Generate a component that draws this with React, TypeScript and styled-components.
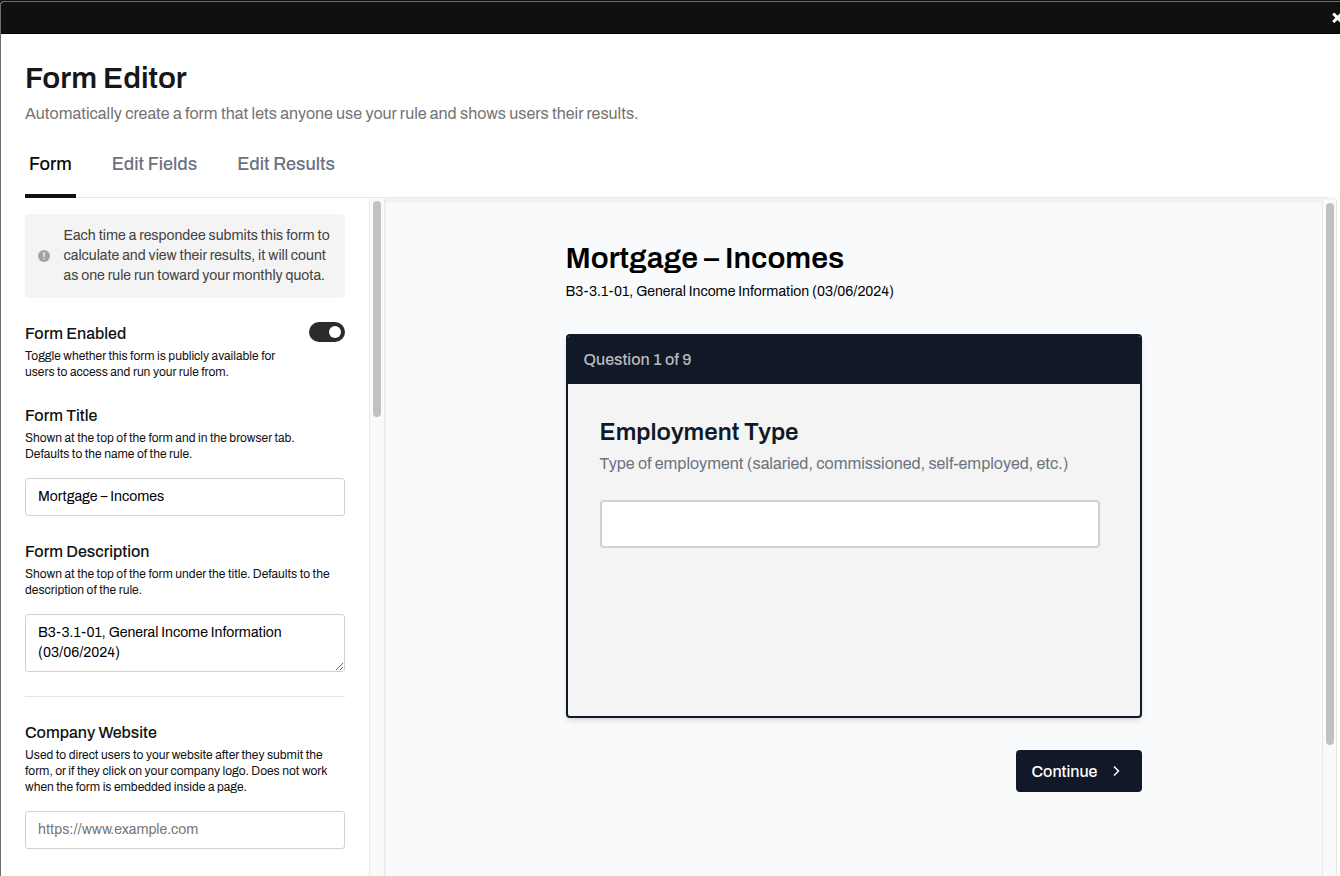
import React from "react";
import styled, { createGlobalStyle } from "styled-components";

const GlobalStyle = createGlobalStyle`
  *, *::before, *::after { box-sizing: border-box; }
  body {
    margin: 0;
    background: #111;
    overflow: hidden;
    font-family: Archivo, "Liberation Sans", Arial, sans-serif;
    color: #111;
  }
  h1, h2, h3, p { margin: 0; }
  input, textarea, button { font-family: inherit; }
`;

const Window = styled.div`
  display: flex;
  flex-direction: column;
  width: 100%;
  height: 876px;
  padding-top: 1px;
`;

const Frame = styled.div`
  flex: 1;
  min-height: 0;
  display: flex;
  flex-direction: column;
  background: #fff;
  border-top: 1px solid #6e6e70;
  border-left: 1px solid #6e6e70;
  border-top-left-radius: 4px;
  overflow: hidden;
`;

const TopBar = styled.div`
  display: flex;
  justify-content: flex-end;
  align-items: center;
  flex: none;
  height: 32px;
  background: #101010;
  border-bottom: 1px solid #000;
`;

const CloseIcon = styled.svg`
  flex: none;
  width: 11px;
  height: 11px;
  margin-right: -3px;
  stroke: #fff;
  stroke-width: 3;
`;

const Header = styled.header`
  flex: none;
  padding: 26px 11px 0 24px;
`;

const Title = styled.h1`
  font-size: 30px;
  line-height: 36px;
  font-weight: 600;
  color: #171717;
`;

const Subtitle = styled.p`
  margin-top: 6px;
  font-size: 16px;
  line-height: 24px;
  color: #737373;
`;

const Tabs = styled.nav`
  display: flex;
  gap: 32px;
  margin-top: 24px;
  height: 48px;
  box-shadow: inset 0 -1px #e5e7eb;
`;

const Tab = styled.a<{ $active?: boolean }>`
  padding: 0 4px;
  font-size: 18px;
  line-height: 28px;
  font-weight: 500;
  color: ${(p) => (p.$active ? "#0a0a0a" : "#6b7280")};
  border-bottom: 4px solid ${(p) => (p.$active ? "#111" : "transparent")};
`;

const Body = styled.div`
  flex: 1;
  min-height: 0;
  display: flex;
`;

const Sidebar = styled.aside`
  flex: none;
  width: 368px;
  padding: 16px 24px;
  overflow: hidden;
`;

const Track = styled.div<{ $height: number; $wide?: boolean }>`
  flex: none;
  width: ${(p) => (p.$wide ? 16 : 15)}px;
  background: #fafafa;
  border: solid #e8e8e8;
  border-width: 0 1px;
  padding: 3px 3px 0;
  &::before {
    content: "";
    display: block;
    width: 8px;
    height: ${(p) => p.$height}px;
    border-radius: 4px;
    background: #c1c1c1;
  }
`;

const Notice = styled.div`
  display: flex;
  align-items: center;
  gap: 13.5px;
  height: 84px;
  padding: 0 13px;
  border-radius: 4px;
  background: #f4f4f4;
  color: #404040;
  font-size: 14px;
  line-height: 20px;
  white-space: nowrap;
  svg { flex: none; display: block; }
`;

const Line = styled.span`
  display: block;
`;

const Section = styled.section`
  margin-top: 24px;
`;

const ToggleSection = styled(Section)`
  display: flex;
  justify-content: space-between;
`;

const Label = styled.h3`
  font-size: 16px;
  line-height: 24px;
  font-weight: 500;
`;

const Hint = styled.p`
  margin-top: 2px;
  font-size: 12px;
  line-height: 16px;
  white-space: nowrap;
`;

const Toggle = styled.button`
  display: flex;
  justify-content: flex-end;
  align-items: center;
  width: 36px;
  height: 20px;
  padding: 0 4px;
  border: 0;
  border-radius: 10px;
  background: #2b2b2b;
  &::before {
    content: "";
    width: 12px;
    height: 12px;
    border-radius: 50%;
    background: #fff;
  }
`;

const TextInput = styled.input`
  display: block;
  width: 100%;
  height: 38px;
  margin-top: 16px;
  padding: 0 12px 2px;
  border: 1px solid #d1d1d1;
  border-radius: 3px;
  background: #fff;
  font-size: 14px;
  color: #000;
  &::placeholder { color: #757575; }
`;

const TextArea = styled.textarea`
  display: block;
  width: 100%;
  height: 58px;
  margin-top: 16px;
  padding: 8px 12px;
  border: 1px solid #d1d1d1;
  border-radius: 3px;
  font-size: 14px;
  line-height: 20px;
  color: #000;
  resize: vertical;
  overflow: hidden;
`;

const Divider = styled.hr`
  height: 1px;
  margin: 24px 0 0;
  border: 0;
  background: #e5e5e5;
`;

const PreviewFrame = styled.div`
  flex: 1;
  min-width: 0;
  display: flex;
  margin-right: 3px;
  border-top: 2px solid #f2f3f5;
`;

const Preview = styled.main`
  flex: 1;
  min-width: 0;
  display: flex;
  justify-content: center;
  padding-top: 40px;
  background: #f9fafc;
  box-shadow: inset 0 3px 3px -1px rgba(0, 0, 0, 0.04), inset 1px 0 1px rgba(0, 0, 0, 0.03);
`;

const Form = styled.div`
  width: 576px;
  display: flex;
  flex-direction: column;
`;

const FormTitle = styled.h1`
  font-size: 30px;
  line-height: 36px;
  font-weight: 600;
  color: #000;
`;

const FormDescription = styled.p`
  margin-top: 6px;
  font-size: 14px;
  line-height: 20px;
  color: #000;
`;

const Card = styled.section`
  height: 384px;
  margin-top: 32px;
  border: 2px solid #111827;
  border-radius: 4px;
  background: #f4f4f4;
  box-shadow: 0 4px 6px -1px rgba(0, 0, 0, 0.1), 0 2px 4px -2px rgba(0, 0, 0, 0.1);
`;

const CardHeader = styled.div`
  height: 48px;
  padding: 0 16px;
  border-radius: 2px 2px 0 0;
  background: #111827;
  color: #b9bbbf;
  font-size: 16px;
  line-height: 47px;
  font-weight: 500;
`;

const CardBody = styled.div`
  padding: 32px 40px 0 32px;
`;

const Question = styled.h2`
  font-size: 24px;
  line-height: 32px;
  font-weight: 600;
  color: #111827;
`;

const QuestionHint = styled.p`
  margin-top: 4px;
  font-size: 16px;
  line-height: 24px;
  color: #6b7280;
`;

const Answer = styled.input`
  display: block;
  width: 500px;
  height: 48px;
  margin-top: 24px;
  border: 2px solid #d1d1d1;
  border-radius: 4px;
  background: #fff;
`;

const Continue = styled.button`
  align-self: flex-end;
  display: flex;
  align-items: center;
  gap: 14px;
  width: 126px;
  height: 42px;
  margin-top: 32px;
  padding: 0 0 0 16px;
  border: 0;
  border-radius: 4px;
  background: #111827;
  color: #fff;
  font-size: 16px;
  font-weight: 500;
`;

export default function App() {
  return (
    <Window>
      <GlobalStyle />
      <Frame>
        <TopBar>
          <CloseIcon viewBox="0 0 11 11">
            <path d="M1.2 1.5 9.8 10.1M9.8 1.5 1.2 10.1" />
          </CloseIcon>
        </TopBar>
        <Header>
          <Title>Form Editor</Title>
          <Subtitle>
            Automatically create a form that lets anyone use your rule and shows users their results.
          </Subtitle>
          <Tabs>
            <Tab $active>Form</Tab>
            <Tab>Edit Fields</Tab>
            <Tab>Edit Results</Tab>
          </Tabs>
        </Header>
        <Body>
          <Sidebar>
            <Notice>
              <svg width="12" height="12" viewBox="0 0 12 12">
                <circle cx="6" cy="6" r="6" fill="#a3a3a3" />
                <path d="M6 2.8v3.6" stroke="#f4f4f4" strokeWidth="1.4" strokeLinecap="round" />
                <circle cx="6" cy="8.8" r="0.8" fill="#f4f4f4" />
              </svg>
              <p>
                <Line>Each time a respondee submits this form to</Line>
                <Line>calculate and view their results, it will count</Line>
                <Line>as one rule run toward your monthly quota.</Line>
              </p>
            </Notice>
            <ToggleSection>
              <div>
                <Label>Form Enabled</Label>
                <Hint>
                  <Line>Toggle whether this form is publicly available for</Line>
                  <Line>users to access and run your rule from.</Line>
                </Hint>
              </div>
              <Toggle aria-label="Form Enabled" />
            </ToggleSection>
            <Section>
              <Label>Form Title</Label>
              <Hint>
                <Line>Shown at the top of the form and in the browser tab.</Line>
                <Line>Defaults to the name of the rule.</Line>
              </Hint>
              <TextInput defaultValue="Mortgage – Incomes" />
            </Section>
            <Section>
              <Label>Form Description</Label>
              <Hint>
                <Line>Shown at the top of the form under the title. Defaults to the</Line>
                <Line>description of the rule.</Line>
              </Hint>
              <TextArea defaultValue={"B3-3.1-01, General Income Information\n(03/06/2024)"} />
            </Section>
            <Divider />
            <Section>
              <Label>Company Website</Label>
              <Hint>
                <Line>Used to direct users to your website after they submit the</Line>
                <Line>form, or if they click on your company logo. Does not work</Line>
                <Line>when the form is embedded inside a page.</Line>
              </Hint>
              <TextInput placeholder="https://www.example.com" />
            </Section>
          </Sidebar>
          <Track $wide $height={216} />
          <PreviewFrame>
            <Preview>
              <Form>
                <FormTitle>Mortgage – Incomes</FormTitle>
                <FormDescription>B3-3.1-01, General Income Information (03/06/2024)</FormDescription>
                <Card>
                  <CardHeader>Question 1 of 9</CardHeader>
                  <CardBody>
                    <Question>Employment Type</Question>
                    <QuestionHint>
                      Type of employment (salaried, commissioned, self-employed, etc.)
                    </QuestionHint>
                    <Answer aria-label="Employment Type" />
                  </CardBody>
                </Card>
                <Continue>
                  Continue
                  <svg width="10" height="12" viewBox="0 0 10 12" fill="none" stroke="#fff" strokeWidth="1.5">
                    <path d="M3 1.5 7.5 6 3 10.5" />
                  </svg>
                </Continue>
              </Form>
            </Preview>
            <Track $height={542} />
          </PreviewFrame>
        </Body>
      </Frame>
    </Window>
  );
}
